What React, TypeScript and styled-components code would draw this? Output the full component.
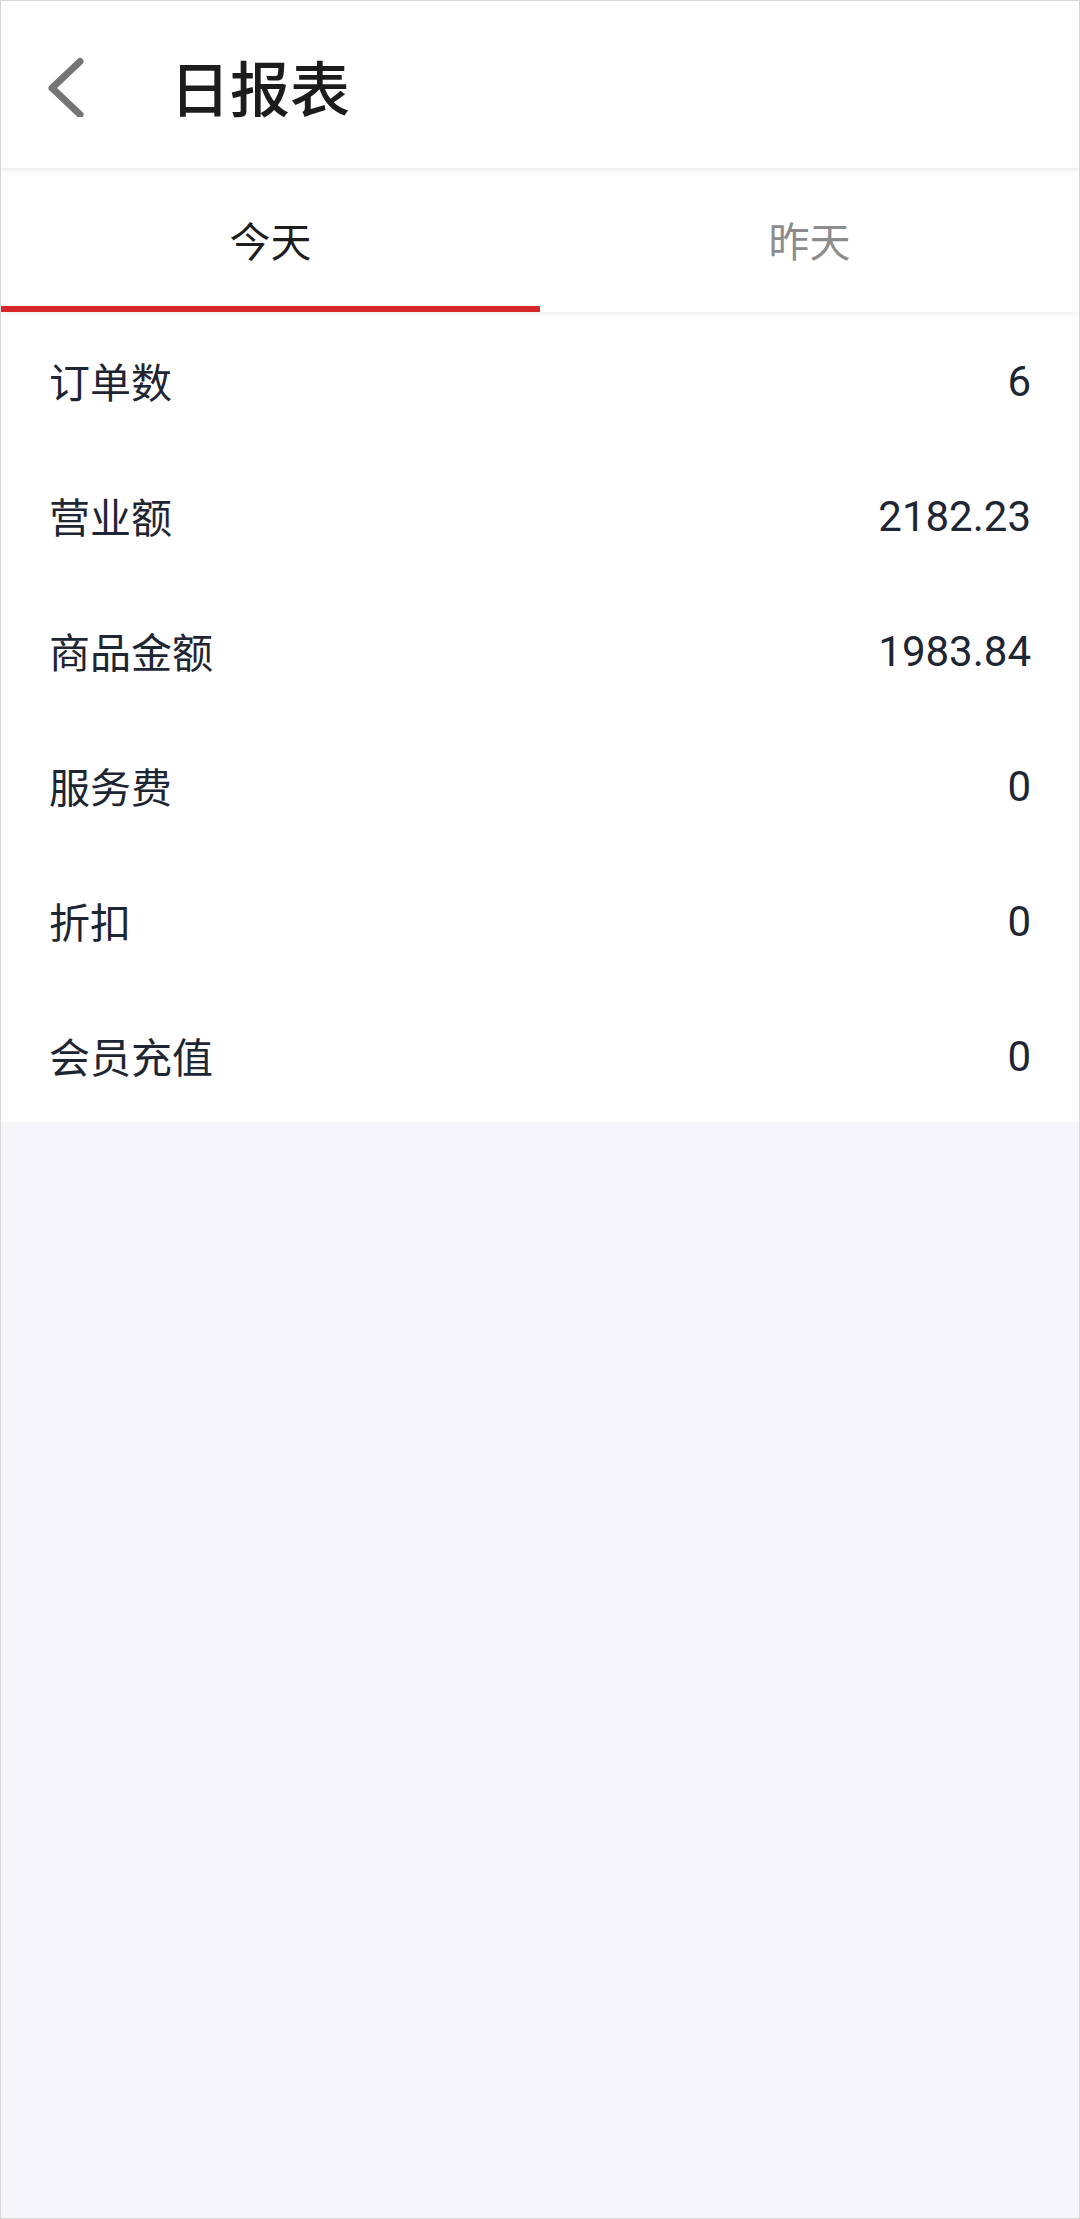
import React, {useState} from "react";
import styled, {createGlobalStyle} from "styled-components";

const rows = [
  {label: "订单数", value: "6"},
  {label: "营业额", value: "2182.23"},
  {label: "商品金额", value: "1983.84"},
  {label: "服务费", value: "0"},
  {label: "折扣", value: "0"},
  {label: "会员充值", value: "0"},
]

const App = () => {
  const [tab, setTab] = useState(0)

  return (
    <Frame>
      <GlobalStyle/>
      <Header>
        <BackBtn>
          <svg width="40" height="64" viewBox="0 0 40 64">
            <polyline points="32,8.5 4,35 32,61.5" fill="none" stroke="#757575"
                      strokeWidth="7" strokeLinecap="round" strokeLinejoin="round"/>
          </svg>
        </BackBtn>
        <Title>日报表</Title>
      </Header>

      <Tabs>
        {["今天", "昨天"].map((t, i) => (
          <Tab key={t} $active={tab === i} onClick={() => setTab(i)}>{t}</Tab>
        ))}
      </Tabs>

      <List>
        {rows.map(r => (
          <Row key={r.label}>
            <Label>{r.label}</Label>
            <Value>{r.value}</Value>
          </Row>
        ))}
      </List>
    </Frame>
  )
}

export default App

const GlobalStyle = createGlobalStyle`
  body {
    margin: 0;
    background: #f5f5fa;
    font-family: Roboto, "Noto Sans CJK SC", sans-serif;
  }
`

const Frame = styled.div`
  width: 1080px;
  height: 2219px;
  box-sizing: border-box;
  border: 1px solid #d6d6d6;
  background: #f5f5fa;
  display: flex;
  flex-direction: column;
  overflow: hidden;
`

const Header = styled.header`
  height: 167px;
  flex-shrink: 0;
  display: flex;
  align-items: center;
  background: #fff;
  position: relative;
  z-index: 2;
  box-shadow: 0 2px 6px rgba(0, 0, 0, .1);
`

const BackBtn = styled.div`
  margin-left: 47px;
  width: 40px;
  height: 64px;
  display: flex;
  cursor: pointer;
`

const Title = styled.h1`
  margin: 2px 0 0 82px;
  font-size: 60px;
  font-weight: 500;
  color: #1c1c1c;
  font-family: "Noto Sans CJK SC", sans-serif;
  line-height: 1;
`

const Tabs = styled.nav`
  height: 144px;
  flex-shrink: 0;
  display: grid;
  grid-template-columns: 1fr 1fr;
  background: #fff;
  position: relative;
  z-index: 1;
  box-shadow: 0 2px 6px rgba(0, 0, 0, .08);
`

const Tab = styled.div<{ $active: boolean }>`
  display: flex;
  align-items: center;
  justify-content: center;
  padding-top: 4px;
  font-size: 41px;
  font-family: "Noto Sans CJK SC", sans-serif;
  color: ${p => p.$active ? "#1e1e1e" : "#8c8c8c"};
  border-bottom: 6px solid ${p => p.$active ? "#d6282b" : "transparent"};
  cursor: pointer;
`

const List = styled.section`
  background: #fff;
`

const Row = styled.div`
  height: 135px;
  display: flex;
  align-items: center;
  justify-content: space-between;
  padding: 0 48px 0 48px;
  color: #1f2633;
`

const Label = styled.span`
  font-size: 41px;
  font-family: "Noto Sans CJK SC", sans-serif;
`

const Value = styled.span`
  padding-top: 3px;
  font-size: 42px;
  font-family: Roboto, sans-serif;
`
